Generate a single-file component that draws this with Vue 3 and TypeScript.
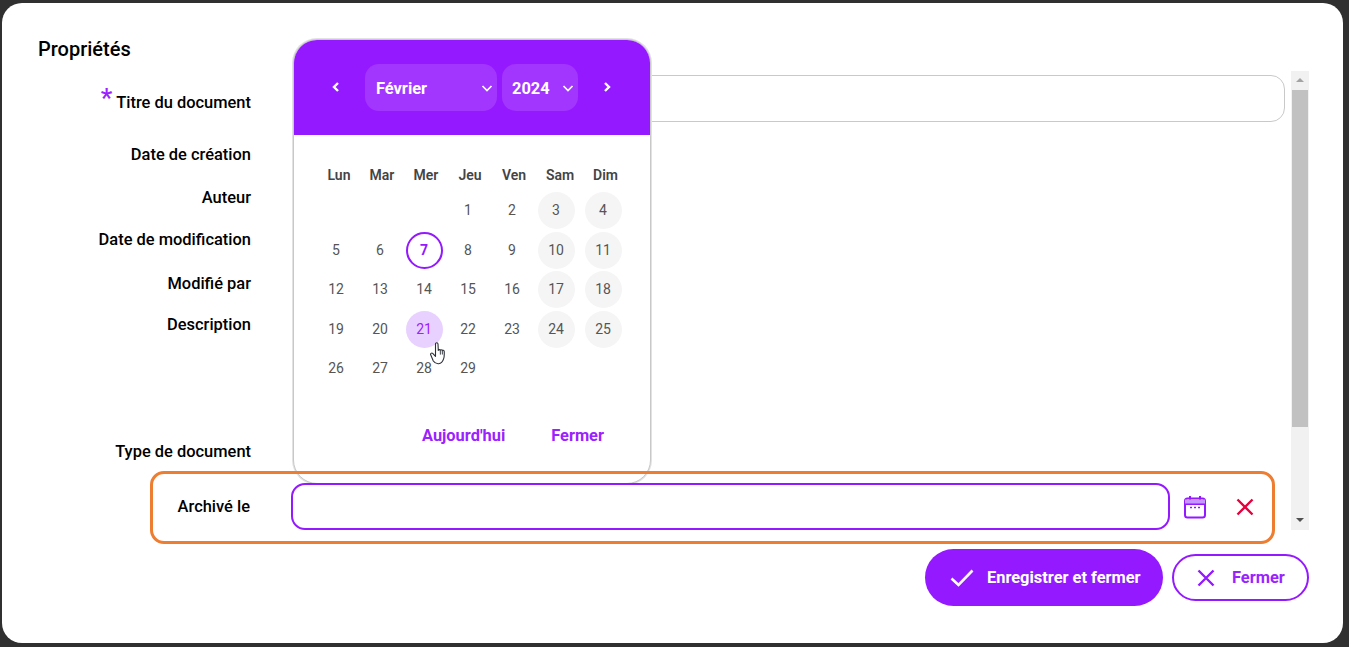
<script setup lang="ts">
interface Row { label: string; cls: string; required?: boolean; input?: boolean }
const rows: Row[] = [
  { label: 'Titre du document', cls: 'r-title', required: true, input: true },
  { label: 'Date de création', cls: 'r-created' },
  { label: 'Auteur', cls: 'r-author' },
  { label: 'Date de modification', cls: 'r-modified' },
  { label: 'Modifié par', cls: 'r-by' },
  { label: 'Description', cls: 'r-desc' },
  { label: 'Type de document', cls: 'r-type' },
]
const weekdays = ['Lun', 'Mar', 'Mer', 'Jeu', 'Ven', 'Sam', 'Dim']
const leading = [0, 0, 0]
const days = Array.from({ length: 29 }, (_, i) => i + 1)
const isWeekend = (d: number) => d % 7 === 3 || d % 7 === 4
</script>

<template>
  <div class="modal">
    <h2 class="title">Propriétés</h2>

    <div class="main">
      <div class="form">
        <div v-for="row in rows" :key="row.label" class="row" :class="row.cls">
          <label class="label"><span v-if="row.required" class="req">*</span>{{ row.label }}</label>
          <div v-if="row.input" class="text-input"></div>
        </div>
        <div class="archive">
          <label class="archive-label">Archivé le</label>
          <div class="date-input"></div>
          <svg class="cal-icon" viewBox="0 0 24 24" width="24" height="24" fill="none" stroke="#9419ff" stroke-width="2">
            <rect x="2" y="3.500" width="20" height="19" rx="2.500" />
            <path d="M2 9h20M7 1v4M17 1v4" />
            <path d="M2 4.500h20v4H2z" fill="#c896ff" stroke="none" />
            <path d="M7 12.500h2M11 12.500h2M15 12.500h2" stroke-width="1.600" />
          </svg>
          <svg class="clear-icon" viewBox="0 0 18 18" width="18" height="18" fill="none" stroke="#e6003c" stroke-width="2.4">
            <path d="M1.500 1.500l15 15M16.500 1.500l-15 15" />
          </svg>
        </div>
      </div>
      <div class="scrollbar">
        <span class="arrow-up"></span>
        <div class="thumb"></div>
        <span class="arrow-down"></span>
      </div>
    </div>

    <div class="footer">
      <button class="btn primary">
        <svg viewBox="0 0 24 18" width="24" height="18" fill="none" stroke="#fff" stroke-width="2.6"><path d="M1.500 9.500l7 6.500L22.500 1.500" /></svg>
        Enregistrer et fermer
      </button>
      <button class="btn outline">
        <svg viewBox="0 0 18 18" width="18" height="18" fill="none" stroke="#9419ff" stroke-width="2.4"><path d="M1.500 1.500l15 15M16.500 1.500l-15 15" /></svg>
        Fermer
      </button>
    </div>

    <div class="calendar">
      <div class="cal-head">
        <svg class="nav prev" viewBox="0 0 8 10" width="8" height="10" fill="none" stroke="#fff" stroke-width="2.4"><path d="M6 1L2 5l4 4" /></svg>
        <div class="select month">
          <span>Février</span>
          <svg viewBox="0 0 12 7" width="12" height="7" fill="none" stroke="#fff" stroke-width="1.7"><path d="M1.500 1l4.500 4.500L10.500 1" /></svg>
        </div>
        <div class="select year">
          <span>2024</span>
          <svg viewBox="0 0 12 7" width="12" height="7" fill="none" stroke="#fff" stroke-width="1.7"><path d="M1.500 1l4.500 4.500L10.500 1" /></svg>
        </div>
        <svg class="nav next" viewBox="0 0 8 10" width="8" height="10" fill="none" stroke="#fff" stroke-width="2.4"><path d="M2 1l4 4-4 4" /></svg>
      </div>

      <div class="weekdays">
        <span v-for="w in weekdays" :key="w">{{ w }}</span>
      </div>
      <div class="days">
        <span v-for="(_, i) in leading" :key="'e' + i"></span>
        <span v-for="d in days" :key="d" class="day">
          <span
            class="num"
            :class="{ weekend: isWeekend(d), today: d === 7, hover: d === 21 }"
          >{{ d }}</span>
        </span>
      </div>
      <div class="cal-foot">
        <span class="link">Aujourd'hui</span>
        <span class="link">Fermer</span>
      </div>
    </div>

    <svg class="cursor" viewBox="0 0 17 23" width="17" height="23" stroke="#2b2f36" stroke-width="1.100" fill="#fff" stroke-linejoin="round">
      <path d="M5.500 2c0-1.600 2.400-1.600 2.500 0l.3 6.500c.2-1.200 1.900-1.200 2 0 .2-1 1.800-1 2 .2.2-.8 1.700-.7 1.900.6.200 3 .1 5.500-.6 7.600-.7 2.200-2.300 4.600-5 4.800-2.600.2-4.200-1-5.300-2.700L.8 13c-.8-1.300.8-2.600 1.900-1.600l2.800 2.900z" />
      <path d="M10.300 8.800l.1 3.800M12.300 9l.1 3.500" fill="none" stroke-width=".9" />
    </svg>
  </div>
</template>

<style>
html, body { margin: 0; background: #303030; overflow: hidden; }
</style>

<style scoped>
.modal {
  position: relative;
  box-sizing: border-box;
  width: 1341px;
  height: 640px;
  margin: 3px 0 0 2px;
  padding: 34px 34px 0 36px;
  background: #fff;
  border-radius: 20px;
  font-family: Roboto, "Liberation Sans", sans-serif;
  color: #000;
}
.title {
  margin: 0 0 10px;
  font-size: 20px;
  line-height: 24px;
  font-weight: 500;
}
.main { display: flex; height: 459px; }
.form { width: 1253px; flex: none; }
.row { display: flex; align-items: flex-start; }
.label {
  flex: none;
  width: 213px;
  margin-right: 41px;
  text-align: right;
  font-size: 16.45px;
  line-height: 20px;
  font-weight: 500;
}
.req {
  color: #9b22ff;
  font-size: 26px;
  line-height: 0;
  margin-right: 4px;
  vertical-align: 1px;
}
.r-title { height: 62px; }
.r-title .label { margin-top: 22px; }
.r-created { height: 42px; }
.r-created .label { margin-top: 12px; }
.r-author { height: 44px; }
.r-author .label { margin-top: 13px; }
.r-modified { height: 40px; }
.r-modified .label { margin-top: 11px; }
.r-by { height: 48px; }
.r-by .label { margin-top: 15px; }
.r-desc { height: 124px; }
.r-desc .label { margin-top: 8px; }
.r-type { height: 40px; }
.r-type .label { margin-top: 11px; }

.text-input {
  box-sizing: border-box;
  width: 991px;
  height: 47px;
  margin: 4px 0 0 2px;
  border: 1px solid #c9c9c9;
  border-radius: 14px;
}
.archive {
  position: relative;
  z-index: 3;
  box-sizing: border-box;
  display: flex;
  align-items: center;
  width: 1125px;
  height: 73px;
  margin-left: 112px;
  border: 3px solid #ed7d31;
  border-radius: 14px;
}
.archive-label {
  flex: none;
  width: 97px;
  margin-right: 41px;
  margin-top: -2px;
  text-align: right;
  font-size: 16.45px;
  line-height: 20px;
  font-weight: 500;
}
.date-input {
  box-sizing: border-box;
  flex: none;
  width: 879px;
  height: 47px;
  margin-top: -2px;
  border: 2px solid #9419ff;
  border-radius: 14px;
}
.cal-icon { margin-left: 13px; flex: none; margin-top: -2px; }
.clear-icon { margin-left: 29px; flex: none; margin-top: -1px; }

.scrollbar {
  position: relative;
  flex: none;
  width: 18px;
  background: #f1f1f1;
}
.thumb {
  position: absolute;
  left: 1px;
  top: 19px;
  width: 16px;
  height: 337px;
  background: #c1c1c1;
}
.arrow-up, .arrow-down {
  position: absolute;
  left: 5px;
  width: 0;
  height: 0;
  border-left: 4px solid transparent;
  border-right: 4px solid transparent;
}
.arrow-up { top: 7px; border-bottom: 4px solid #a3a3a3; }
.arrow-down { bottom: 8px; border-top: 4px solid #505050; }

.footer {
  display: flex;
  justify-content: flex-end;
  align-items: center;
  gap: 9px;
  margin-top: 19px;
}
.btn {
  box-sizing: border-box;
  display: flex;
  align-items: center;
  font-family: inherit;
  font-size: 16.4px;
  font-weight: 700;
  cursor: pointer;
  padding: 0;
}
.primary {
  width: 238px;
  height: 57px;
  padding-left: 25px;
  gap: 13px;
  border: 0;
  border-radius: 29px;
  background: #9419ff;
  color: #fff;
}
.outline {
  width: 137px;
  height: 47px;
  padding-left: 23px;
  gap: 17px;
  border: 2px solid #9419ff;
  border-radius: 24px;
  background: #fff;
  color: #9b22ff;
}

.calendar {
  position: absolute;
  z-index: 2;
  left: 291px;
  top: 36px;
  box-sizing: border-box;
  width: 358px;
  height: 445px;
  border: 1px solid #c8c8c8;
  border-radius: 24px;
  background: #fff;
  box-shadow: 0 0 0 1px #e2e2e2;
  overflow: hidden;
}
.cal-head {
  display: flex;
  align-items: center;
  height: 95px;
  background: #9419ff;
}
.nav { flex: none; }
.prev { margin-left: 38px; margin-right: 25px; margin-top: -2px; }
.next { margin-left: 25px; margin-top: -2px; }
.select {
  box-sizing: border-box;
  flex: none;
  display: flex;
  align-items: center;
  justify-content: space-between;
  height: 47px;
  padding: 2px 4px 0 10px;
  margin-top: -1px;
  border-radius: 14px;
  background: #a236ff;
  color: #fff;
  font-size: 16.4px;
  font-weight: 700;
}
.month { width: 132px; margin-right: 5px; padding-left: 11px; }
.year { width: 76px; }

.weekdays, .days {
  display: grid;
  grid-template-columns: repeat(6, 44px) 50px;
  margin-left: 20px;
}
.weekdays {
  margin-top: 29px;
  height: 22px;
  padding-left: 2px;
  color: #444;
  font-size: 14px;
  line-height: 22px;
  font-weight: 600;
  text-align: center;
}
.weekdays span:first-child { padding-left: 2px; }
.weekdays span:nth-child(6) { padding-left: 4px; }
.weekdays span:last-child { padding-left: 2px; margin-left: -1px; }
.days {
  grid-auto-rows: 39.5px;
  margin-top: 5px;
}
.day { display: flex; align-items: center; justify-content: center; }
.num {
  display: flex;
  align-items: center;
  justify-content: center;
  width: 37px;
  height: 37px;
  box-sizing: border-box;
  border-radius: 50%;
  color: #555;
  font-size: 14px;
  padding-bottom: 1px;
}
.weekend { background: #f5f5f5; }
.today { border: 2px solid #9419ff; color: #9419ff; font-weight: 700; }
.hover { background: #e8d1fe; color: #9b22ff; }

.cal-foot {
  position: absolute;
  top: 385px;
  left: 128px;
  display: flex;
  gap: 46px;
}
.link {
  color: #9b22ff;
  font-size: 16.4px;
  line-height: 22px;
  font-weight: 700;
}
.cursor {
  position: absolute;
  z-index: 4;
  left: 428px;
  top: 339px;
}
</style>
